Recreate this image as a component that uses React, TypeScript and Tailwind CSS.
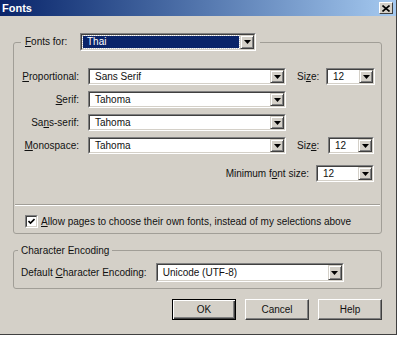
import React from 'react';

// Classic Windows "Fonts" dialog

const Arrow = () => (
  <svg width="7" height="4" viewBox="0 0 7 4">
    <path d="M0 0h7L3.5 4z" fill="#000" />
  </svg>
);

function DropButton() {
  return (
    <div className="flex w-[14px] shrink-0 items-center justify-center border border-t-[#d4d0c8] border-l-[#d4d0c8] border-r-[#404040] border-b-[#404040] bg-[#d4d0c8] shadow-[inset_1px_1px_0_#fff,inset_-1px_-1px_0_#808080]">
      <Arrow />
    </div>
  );
}

interface ComboProps {
  value: string;
  size: string;
  selected?: boolean;
}

function Combo({ value, size, selected }: ComboProps) {
  return (
    <div className={`flex shrink-0 border border-t-[#808080] border-l-[#808080] border-r-white border-b-white ${size}`}>
      <div className="flex min-w-0 flex-1 border border-t-[#404040] border-l-[#404040] border-r-[#d4d0c8] border-b-[#d4d0c8] bg-white">
        {selected ? (
          <div className="m-[1px] flex flex-1 items-center bg-[#0a246a] pl-[4px] text-white outline-1 outline-dotted outline-[#c9c9c9]">
            {value}
          </div>
        ) : (
          <div className="flex flex-1 items-center pl-[5px]">{value}</div>
        )}
        <DropButton />
      </div>
    </div>
  );
}

function Btn({ label, isDefault }: { label: string; isDefault?: boolean }) {
  return (
    <div
      className={`flex h-[21px] w-[64px] items-center justify-center bg-[#d4d0c8] ${
        isDefault
          ? 'border border-black shadow-[inset_1px_1px_0_#fff,inset_-1px_-1px_0_#404040,inset_-2px_-2px_0_#808080]'
          : 'border border-t-white border-l-white border-r-[#404040] border-b-[#404040] shadow-[inset_-1px_-1px_0_#808080]'
      }`}
    >
      {label}
    </div>
  );
}

const U = ({ children }: { children: React.ReactNode }) => <span className="underline underline-offset-[1px]">{children}</span>;

export default function App() {
  return (
    <div className="h-[338px] w-[400px] bg-white font-['Liberation_Sans',Arial,sans-serif] text-[10px] leading-none text-[#111]">
      <div className="flex h-[335px] w-[397px] flex-col border-r border-b border-r-[#404040] border-b-[#404040] bg-[#d4d0c8]">
        {/* title bar */}
        <div className="flex h-[16px] shrink-0 items-center justify-between bg-linear-to-r from-[#0a246a] to-[#a6caf0] pl-[2px] pr-[3px]">
          <span className="text-[11px] font-bold text-white">Fonts</span>
          <div className="flex h-[12px] w-[14px] items-center justify-center border border-t-white border-l-white border-r-[#404040] border-b-[#404040] bg-[#d4d0c8]">
            <svg width="8" height="7" viewBox="0 0 8 7">
              <path d="M0.5 0.5L7.5 6.5M7.5 0.5L0.5 6.5" stroke="#000" strokeWidth="1.6" />
            </svg>
          </div>
        </div>

        {/* fonts group */}
        <fieldset className="ml-[13px] mt-[17px] w-[369px] rounded-[3px] border border-[#a19e97] pb-[5px]">
          <legend className="ml-[7px] px-[4px]">
            <div className="flex items-center">
              <span className="w-[55px]">
                <U>F</U>onts for:
              </span>
              <Combo value="Thai" size="h-[18px] w-[176px]" selected />
            </div>
          </legend>

          <div className="flex flex-col gap-[6px] pt-[17px]">
            <div className="flex items-center">
              <span className="w-[65px] text-right">
                <U>P</U>roportional:
              </span>
              <div className="ml-[9px]">
                <Combo value="Sans Serif" size="h-[17px] w-[198px]" />
              </div>
              <span className="ml-[11px] w-[29px]">
                Si<U>z</U>e:
              </span>
              <Combo value="12" size="h-[17px] w-[49px]" />
            </div>
            <div className="flex items-center">
              <span className="w-[65px] text-right">
                <U>S</U>erif:
              </span>
              <div className="ml-[9px]">
                <Combo value="Tahoma" size="h-[17px] w-[198px]" />
              </div>
            </div>
            <div className="flex items-center">
              <span className="w-[65px] text-right">
                Sa<U>n</U>s-serif:
              </span>
              <div className="ml-[9px]">
                <Combo value="Tahoma" size="h-[17px] w-[198px]" />
              </div>
            </div>
            <div className="flex items-center">
              <span className="w-[65px] text-right">
                <U>M</U>onospace:
              </span>
              <div className="ml-[9px]">
                <Combo value="Tahoma" size="h-[17px] w-[198px]" />
              </div>
              <span className="ml-[11px] w-[31px]">
                Siz<U>e</U>:
              </span>
              <Combo value="12" size="h-[17px] w-[46px]" />
            </div>
          </div>

          <div className="mt-[11px] flex items-center justify-end pr-[7px]">
            <span>
              Minimum f<U>o</U>nt size:
            </span>
            <div className="ml-[7px]">
              <Combo value="12" size="h-[17px] w-[58px]" />
            </div>
          </div>

          <div className="mx-[1px] mt-[22px] border-t border-t-[#a19e97] shadow-[0_1px_0_#fff]" />

          <div className="flex items-center pl-[11px] pt-[10px]">
            <div className="flex h-[13px] w-[13px] items-center justify-center border border-t-[#808080] border-l-[#808080] border-r-white border-b-white">
              <div className="flex h-full w-full items-center justify-center border border-t-[#404040] border-l-[#404040] border-r-[#d4d0c8] border-b-[#d4d0c8] bg-white">
                <svg width="7" height="7" viewBox="0 0 7 7">
                  <path d="M0.5 3L2.5 5L6.5 1" stroke="#000" strokeWidth="1.6" fill="none" />
                </svg>
              </div>
            </div>
            <span className="ml-[3px]">
              <U>A</U>llow pages to choose their own fonts, instead of my selections above
            </span>
          </div>
        </fieldset>

        {/* encoding group */}
        <fieldset className="ml-[13px] mt-[10px] w-[369px] rounded-[3px] border border-[#a19e97] pb-[6px]">
          <legend className="ml-[4px] px-[3px] leading-[13px]">Character Encoding</legend>
          <div className="flex items-center pl-[7px] pt-[6px]">
            <span>
              Default <U>C</U>haracter Encoding:
            </span>
            <div className="ml-[9px]">
              <Combo value="Unicode (UTF-8)" size="h-[19px] w-[188px]" />
            </div>
          </div>
        </fieldset>

        {/* buttons */}
        <div className="ml-[13px] mt-[10px] flex w-[369px] justify-end gap-[9px]">
          <Btn label="OK" isDefault />
          <Btn label="Cancel" />
          <Btn label="Help" />
        </div>
      </div>
    </div>
  );
}
